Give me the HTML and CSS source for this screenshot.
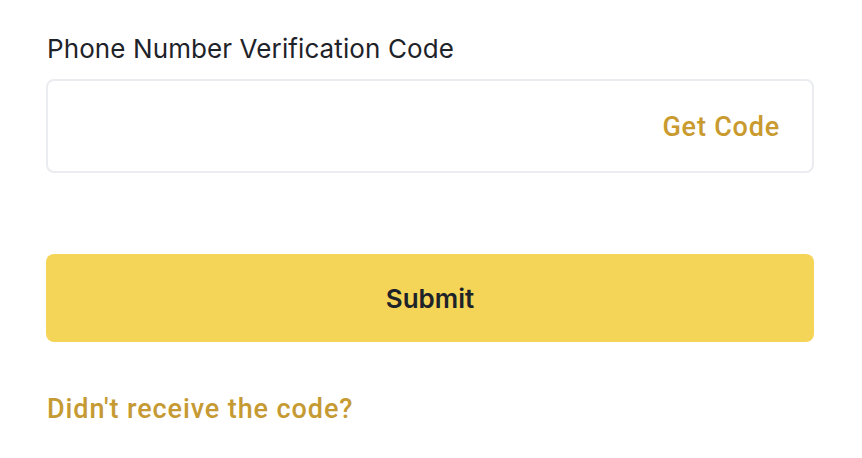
FILE: index.html
```html
<!DOCTYPE html>
<html>
<head>
<meta charset="utf-8">
<link rel="stylesheet" href="styles.css">
</head>
<body>
<div class="form">
  <label class="label">Phone Number Verification Code</label>
  <div class="field">
    <input class="input" type="text">
    <span class="get-code">Get Code</span>
  </div>
  <button class="submit">Submit</button>
  <a class="help">Didn't receive the code?</a>
</div>
</body>
</html>
```
FILE: styles.css
```css
html, body {
  margin: 0;
  padding: 0;
  background: #ffffff;
}
body {
  font-family: "Inter", "Roboto", "Liberation Sans", sans-serif;
}
.form {
  display: flex;
  flex-direction: column;
  padding: 33px 48px 0 46px;
  width: 768px;
}
.label {
  font-size: 26px;
  color: #1e2329;
  line-height: 32px;
  padding-left: 1px;
  margin-bottom: 14px;
  letter-spacing: 0.1px;
}
.field {
  display: flex;
  align-items: center;
  height: 90px;
  border: 2px solid #eaecef;
  border-radius: 8px;
  padding: 0 32px 0 24px;
}
.input {
  flex: 1;
  border: none;
  outline: none;
  font-size: 24px;
  background: transparent;
  min-width: 0;
}
.get-code {
  font-family: "Roboto", sans-serif;
  font-weight: 500;
  font-size: 27px;
  letter-spacing: 0.8px;
  color: #c99a2e;
  margin-top: 2px;
}
.submit {
  margin-top: 81px;
  height: 88px;
  border: none;
  border-radius: 8px;
  background: #f5d558;
  color: #1e2329;
  font-family: "Inter", sans-serif;
  font-weight: 600;
  font-size: 26px;
  padding: 0;
}
.help {
  margin-top: 51px;
  font-family: "Roboto", sans-serif;
  font-weight: 500;
  font-size: 27px;
  letter-spacing: 0.9px;
  color: #c69a33;
  padding-left: 1px;
}
```
